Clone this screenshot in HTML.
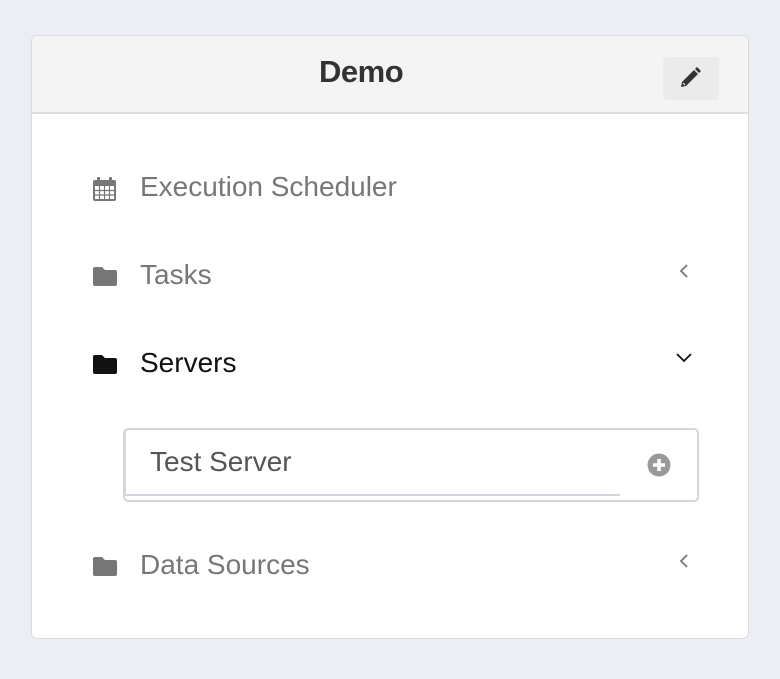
<!DOCTYPE html>
<html><head><style>
body{margin:0;width:780px;height:679px;background:#ebeef3;font-family:"Liberation Sans",sans-serif;position:relative;overflow:hidden}
.card{position:absolute;left:31px;top:35px;width:716px;height:602px;background:#fff;border:1px solid #d9dbde;border-radius:6px;overflow:hidden}
.hdr{position:absolute;left:0;top:0;width:716px;height:76px;background:#f4f4f4;border-bottom:2px solid #dedede}
.title{position:absolute;left:287px;top:18px;font-size:31px;font-weight:bold;color:#333;letter-spacing:-0.5px}
.edit{position:absolute;left:631px;top:21px;width:56px;height:43px;background:#ebebeb;border-radius:4px}
.row{position:absolute;left:0;font-size:28px;color:#777}
.row .t{position:absolute;left:108px;top:-17px;white-space:nowrap}
.row svg.i{position:absolute;left:60px;top:-12px}
.chev{position:absolute;left:645px;top:-14px}
.box{position:absolute;left:91px;top:392px;width:572px;height:70px;border:2px solid #d3d7dd;border-radius:5px}
.box .in{position:absolute;left:0;top:0;width:494px;height:64px;border-bottom:2px solid #d3d7dd;border-left:1px solid #d3d7dd}
</style></head><body>
<div class="card">
<div class="hdr"><div class="title">Demo</div>
<div class="edit"><svg width="56" height="43" viewBox="0 0 56 43"><path d="M18 30 L19 25 L31 13 L35 17 L23 29 Z M32 12 L34 10 L38 14 L36 16 Z" fill="#333"/><path d="M20 26 L22 28" stroke="#ebebeb" stroke-width="1.2"/></svg></div></div>

<div class="row" style="top:152px"><svg class="i" width="26" height="26" viewBox="0 0 26 26"><rect x="1" y="4" width="23" height="21" rx="2" fill="#777"/><rect x="3" y="10" width="19" height="13" fill="#fff"/><path d="M7.5 10v13M12.5 10v13M17.5 10v13M3 14.5h19M3 19h19" stroke="#777" stroke-width="1.2"/><rect x="5" y="1" width="3" height="6" rx="1" fill="#777"/><rect x="17" y="1" width="3" height="6" rx="1" fill="#777"/></svg><span class="t">Execution Scheduler</span></div>

<div class="row" style="top:240px"><svg class="i" width="26" height="24" viewBox="0 0 26 24"><path d="M1 5a2 2 0 0 1 2-2h7l3 3h10a2 2 0 0 1 2 2v12a2 2 0 0 1-2 2H3a2 2 0 0 1-2-2z" fill="#777"/></svg><span class="t">Tasks</span><svg class="chev" width="14" height="18" viewBox="0 0 14 18"><path d="M10 3L4 9l6 6" stroke="#777" stroke-width="1.8" fill="none"/></svg></div>

<div class="row" style="top:328px;color:#111"><svg class="i" width="26" height="24" viewBox="0 0 26 24"><path d="M1 5a2 2 0 0 1 2-2h7l3 3h10a2 2 0 0 1 2 2v12a2 2 0 0 1-2 2H3a2 2 0 0 1-2-2z" fill="#111"/></svg><span class="t">Servers</span><svg class="chev" width="18" height="14" viewBox="0 0 18 14" style="left:643px;top:-13px"><path d="M2 3l7 7 7-7" stroke="#111" stroke-width="1.8" fill="none"/></svg></div>

<div class="box"><div class="in"></div><span style="position:absolute;left:25px;top:16px;font-size:28px;color:#555">Test Server</span><svg style="position:absolute;left:522px;top:23px" width="24" height="24" viewBox="0 0 24 24"><circle cx="12" cy="12" r="11.5" fill="#999"/><path d="M12 6v12M6 12h12" stroke="#fff" stroke-width="3.5"/></svg></div>

<div class="row" style="top:530px"><svg class="i" width="26" height="24" viewBox="0 0 26 24"><path d="M1 5a2 2 0 0 1 2-2h7l3 3h10a2 2 0 0 1 2 2v12a2 2 0 0 1-2 2H3a2 2 0 0 1-2-2z" fill="#777"/></svg><span class="t">Data Sources</span><svg class="chev" width="14" height="18" viewBox="0 0 14 18"><path d="M10 3L4 9l6 6" stroke="#777" stroke-width="1.8" fill="none"/></svg></div>
</div>
</body></html>
